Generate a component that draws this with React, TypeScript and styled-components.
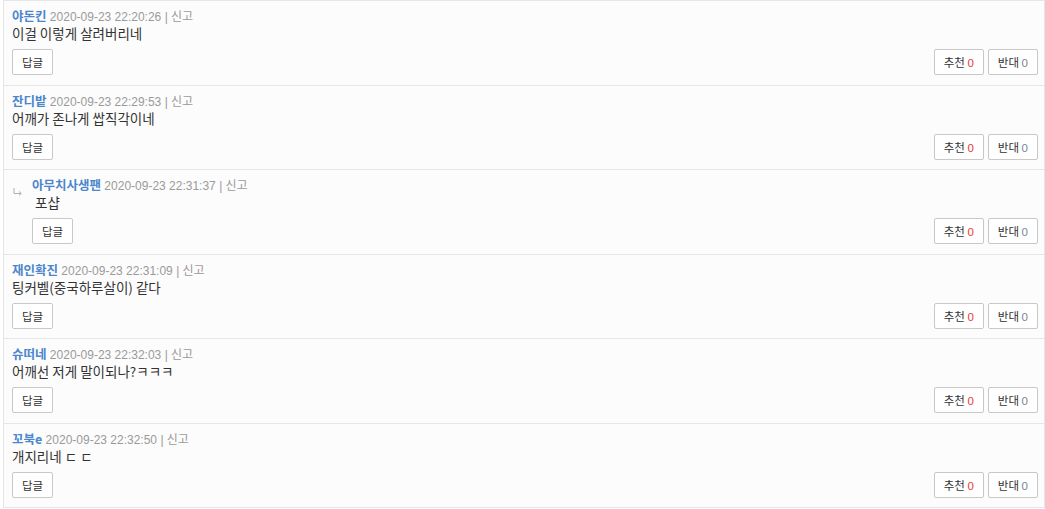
import { styled, createGlobalStyle } from "styled-components";

type Comment = {
  author: string;
  date: string;
  text: string;
  reply?: boolean;
};

const comments: Comment[] = [
  { author: "야돈킨", date: "2020-09-23 22:20:26", text: "이걸 이렇게 살려버리네" },
  { author: "잔디밭", date: "2020-09-23 22:29:53", text: "어깨가 존나게 쌉직각이네" },
  { author: "아무치사생팬", date: "2020-09-23 22:31:37", text: "포샵", reply: true },
  { author: "재인확진", date: "2020-09-23 22:31:09", text: "팅커벨(중국하루살이) 같다" },
  { author: "슈떠네", date: "2020-09-23 22:32:03", text: "어깨선 저게 말이되나?ㅋㅋㅋ" },
  { author: "꼬북e", date: "2020-09-23 22:32:50", text: "개지리네 ㄷ ㄷ" },
];

export default function App() {
  return (
    <>
      <GlobalStyle />
      <List>
        {comments.map((c, i) => (
          <Row key={i}>
            {c.reply && (
              <ReplyMark>
                <svg width="10" height="8" viewBox="0 0 10 8">
                  <path d="M1 0 V5.5 H8 M6 3.5 L8.3 5.5 L6 7.5" fill="none" stroke="#b0b0b0" strokeWidth="1" />
                </svg>
              </ReplyMark>
            )}
            <Body>
              <Header>
                <Author>{c.author}</Author> {c.date} | 신고
              </Header>
              <Text $reply={c.reply}>{c.text}</Text>
              <Actions>
                <SmallButton>답글</SmallButton>
                <VoteGroup>
                  <SmallButton>
                    추천 <Up>0</Up>
                  </SmallButton>
                  <SmallButton>
                    반대 <Down>0</Down>
                  </SmallButton>
                </VoteGroup>
              </Actions>
            </Body>
          </Row>
        ))}
      </List>
    </>
  );
}

const GlobalStyle = createGlobalStyle`
  body {
    margin: 0;
    background: #ffffff;
    font-family: "Liberation Sans", "Noto Sans CJK KR", sans-serif;
  }
`;

const List = styled.div`
  margin-left: 3px;
  width: 1040px;
  border: 1px solid #e6e6e6;
  border-bottom: none;
  background-color: #fcfcfc;
`;

const Row = styled.div`
  display: flex;
  padding: 6px 6px 9.5px 8px;
  border-bottom: 1px solid #e6e6e6;
`;

const ReplyMark = styled.div`
  width: 20px;
  flex-shrink: 0;
  padding: 6px 0 0 1px;
  box-sizing: border-box;
`;

const Body = styled.div`
  flex: 1;
  min-width: 0;
`;

const Header = styled.div`
  font-size: 12px;
  line-height: 18px;
  height: 18px;
  color: #9a9a9a;
  white-space: nowrap;
`;

const Author = styled.span`
  color: #4a86cc;
  font-weight: bold;
  font-size: 12.5px;
  font-family: "Noto Sans CJK KR", "Liberation Sans", sans-serif;
`;

const Text = styled.div<{ $reply?: boolean }>`
  font-family: "Noto Sans CJK KR", sans-serif;
  font-size: 13.5px;
  line-height: 17px;
  height: 17px;
  color: #333333;
  padding-left: ${(p) => (p.$reply ? "3px" : "0")};
`;

const Actions = styled.div`
  display: flex;
  justify-content: space-between;
  align-items: center;
  margin-top: 7px;
`;

const VoteGroup = styled.div`
  display: flex;
  gap: 4px;
`;

const SmallButton = styled.button`
  height: 26px;
  padding: 0 9px;
  border: 1px solid #c8c8c8;
  border-radius: 2px;
  background-color: #ffffff;
  font-family: "Noto Sans CJK KR", "Liberation Sans", sans-serif;
  font-size: 11.5px;
  color: #333333;
  cursor: pointer;
`;

const Up = styled.span`
  color: #e53935;
  font-family: "Liberation Sans", sans-serif;
`;

const Down = styled.span`
  color: #7a8595;
  font-family: "Liberation Sans", sans-serif;
`;
